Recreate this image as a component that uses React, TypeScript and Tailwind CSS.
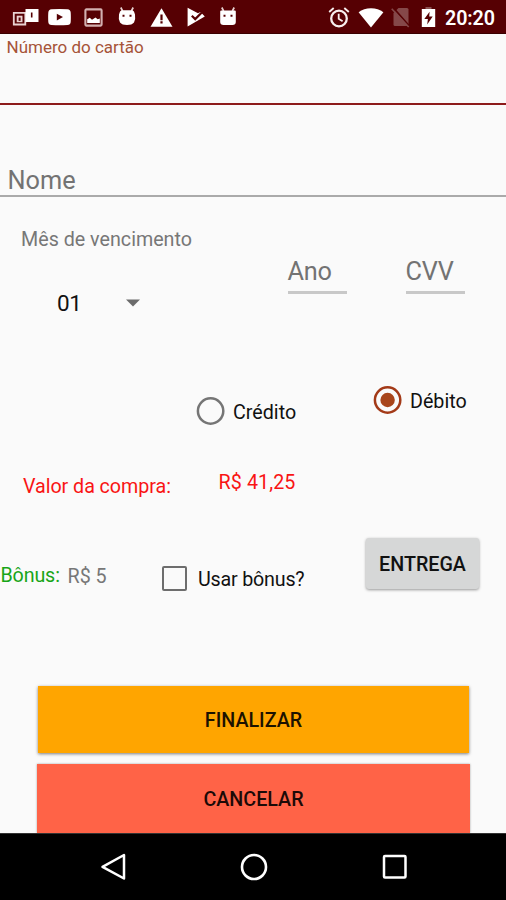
import type { ReactNode } from "react";

const AndroidHead = ({ square }: { square?: boolean }) => (
  <svg width="18" height="20" viewBox="0 0 18 20" fill="#fff">
    <path d="M2.800 1.500 4.600 5M15.200 1.500 13.400 5" stroke="#e6d0d0" strokeWidth="1.700" />
    <path
      fillRule="evenodd"
      d={
        square
          ? "M1.200 5.500Q1.200 4.500 2.200 4.500H15.800Q16.800 4.500 16.800 5.500V16Q16.800 19 13.500 19H4.500Q1.200 19 1.200 16zM4.500 8.700v2h2v-2zm7 0v2h2v-2z"
          : "M3.500 4.200H14.500Q16.200 4.800 17 8.500 17.800 13.500 16 16.500 14 19 9 19T2 16.500Q.2 13.500 1 8.500 1.800 4.800 3.500 4.200zM4.500 8.700v2h2v-2zm7 0v2h2v-2z"
      }
    />
  </svg>
);

const StatusBar = () => (
  <header className="flex h-[34px] items-start border-b border-[#3a0000] bg-[#560003]">
    <div className="flex h-[34px] w-[253px] shrink-0 pl-[12px]">
      <svg className="mt-[8px]" width="28" height="20" viewBox="0 0 28 20">
        <path d="M1.800 4.800h11.500v11.700H1.800z" fill="none" stroke="#e9d2d2" strokeWidth="1.800" />
        <path d="M4.700 7.700h5.800v6.500H4.700z" fill="#e9d2d2" />
        <path d="M6.600 9.500h2v3.400h-2z" fill="#560003" />
        <path d="M13.500 1h13v13h-13z" fill="#fff" />
        <path d="M18.900 4.500h1.600v5h-1.600z" fill="#560003" />
      </svg>
      <svg className="ml-[8px] mt-[9px]" width="23" height="17" viewBox="0 0 23 17">
        <path d="M3.500.3Q11.500-.3 19.500.3 22.500.5 22.700 3.500 23 8.500 22.700 13 22.500 15.800 19.500 16 11.500 16.600 3.500 16 .5 15.800.3 13 0 8.500.3 3.500.5.5 3.500.3z" fill="#fff" />
        <path d="M8.800 4.800v6.700l6.200-3.400z" fill="#560003" />
      </svg>
      <svg className="ml-[13px] mt-[8px]" width="19" height="19" viewBox="0 0 19 19">
        <rect x="1.400" y="1.400" width="16.200" height="16.200" rx="1" fill="none" stroke="#d3b0b0" strokeWidth="2.100" />
        <path d="M3.200 15v-3.800l2.600-1.400 2.200 1.900 3.500-2.300 2.200 1.800 2.100-.6V15z" fill="#fff" />
      </svg>
      <div className="ml-[15px] mt-[6px]">
        <AndroidHead />
      </div>
      <svg className="ml-[14px] mt-[8px]" width="23" height="19" viewBox="0 0 23 19">
        <path d="M11.500.3 22.500 18.700H.5z" fill="#fff" />
        <path d="M10.400 6.500h2.200v5.700h-2.200zm0 6.700h2.200v2.300h-2.200z" fill="#560003" />
      </svg>
      <svg className="ml-[13px] mt-[7px]" width="20" height="20" viewBox="0 0 20 20">
        <path d="M1.600.7 12 6.300 14.500 5 18.800 9.400 1.600 19.500z" fill="#fff" />
        <path d="m5.800 8.800 3.400 3.300 6.600-6.600" fill="none" stroke="#560003" strokeWidth="2.200" />
      </svg>
      <div className="ml-[13px] mt-[6px]">
        <AndroidHead square />
      </div>
    </div>
    <div className="flex h-[34px] pl-[75px]">
      <svg className="mt-[7px]" width="22" height="21" viewBox="0 0 22 21" fill="none" stroke="#f8eeee">
        <circle cx="11" cy="11.500" r="7.800" strokeWidth="2.300" />
        <path d="M1.200 4.900 5.700 1.100M20.800 4.900 16.300 1.100" strokeWidth="1.900" />
        <path d="M10.700 6.700v5.100l3.900 2.400" strokeWidth="1.800" />
      </svg>
      <svg className="ml-[8px] mt-[8px]" width="26" height="20" viewBox="0 0 26 20">
        <path d="M.6 4.200C4 1.600 8.200.2 13 .2s9 1.400 12.400 4L13 19.600z" fill="#fff" />
      </svg>
      <svg className="ml-[7px] mt-[7px]" width="19" height="21" viewBox="0 0 19 21">
        <path d="M7.500 1H16q1.500 0 1.500 1.500V19H4Q2.500 19 2.500 17.500V6z" fill="#854849" />
        <path d="m1.800.2 17 19.500" stroke="#560003" strokeWidth="1.800" />
        <path d="m.7 1.700 17 18.300" stroke="#854849" strokeWidth="1.600" />
      </svg>
      <svg className="ml-[11px] mt-[6px]" width="15" height="22" viewBox="0 0 15 22">
        <path d="M4.500 1h6v3h-6z" fill="#8c5354" />
        <path d="M.8 3h13.400v18H.8z" fill="#fff" />
        <path d="M8.600 5.700 3.300 13h3.600l-.7 5.500 5.500-7.900H8.200z" fill="#560003" />
      </svg>
      <span className="ml-[9px] mt-[7px] text-[19.7px] font-semibold leading-[24px] tracking-[-0.1px] text-white">
        20:20
      </span>
    </div>
  </header>
);

const ShortField = ({ label }: { label: string }) => (
  <div className="flex h-[38px] w-[59px] flex-col border-b-3 border-[#c8c8c8]">
    <span className="pt-px text-[25.3px] leading-[30px] tracking-[-0.2px] text-[#737373]">{label}</span>
  </div>
);

const Radio = ({ checked, children }: { checked?: boolean; children: ReactNode }) => (
  <label className="flex h-[28px] items-center">
    <svg width="29" height="28" viewBox="0 0 29 28">
      <circle cx="14.600" cy="14" r="12.700" fill="none" stroke={checked ? "#a33a18" : "#757575"} strokeWidth="2.500" />
      {checked && <circle cx="14.600" cy="14" r="7.200" fill="#a8451b" />}
    </svg>
    <span className="ml-[8px] mt-[3px] text-[19.7px] leading-[24px] text-[#111]">{children}</span>
  </label>
);

const NavBar = () => (
  <nav className="flex h-[67px] justify-center gap-[113px] border-t border-[#333] bg-black pl-px pt-[19px]">
    <svg width="27" height="28" viewBox="0 0 27 28" fill="none" stroke="#fff" strokeWidth="2.500" strokeLinejoin="round">
      <path d="M24 2v23.500L2.500 13.800z" />
    </svg>
    <svg width="28" height="28" viewBox="0 0 28 28" fill="none" stroke="#fff" strokeWidth="2.600">
      <circle cx="14" cy="14" r="12" />
    </svg>
    <svg width="27" height="28" viewBox="0 0 27 28" fill="none" stroke="#fff" strokeWidth="2.500">
      <rect x="3" y="3" width="21.500" height="21.500" rx="1" />
    </svg>
  </nav>
);

const App = () => {
  return (
    <div className="flex h-[900px] w-[506px] flex-col overflow-hidden bg-[#fafafa] font-[Roboto,sans-serif]">
      <StatusBar />
      <main className="flex flex-1 flex-col">
        <div className="h-[71px] border-b-2 border-[#8d1b1b] pl-[6.5px] pt-[2px]">
          <span className="block text-[17px] leading-[22px] text-[#a65338]">Número do cartão</span>
        </div>
        <div className="h-[92px] border-b-2 border-[#aaa] pl-[7.5px] pt-[61px]">
          <span className="block text-[25.3px] leading-[30px] text-[#737373]">Nome</span>
        </div>

        <section className="flex h-[189px]">
          <div className="w-[287.500px] pl-[21px] pt-[31px]">
            <span className="block text-[19.700px] leading-[24px] text-[#777]">Mês de vencimento</span>
            <div className="mt-[39px] flex items-center pl-[36px]">
              <span className="w-[69px] text-[22.5px] leading-[24px] tracking-[-0.5px] text-[#111]">01</span>
              <svg width="14" height="8" viewBox="0 0 14 8">
                <path d="M0 .5h14L7 7.500z" fill="#6b6b6b" />
              </svg>
            </div>
          </div>
          <div className="flex gap-[59px] pt-[59px]">
            <ShortField label="Ano" />
            <ShortField label="CVV" />
          </div>
        </section>

        <section className="flex h-[84px] items-start pl-[196px]">
          <div className="w-[177px] pt-[11px]">
            <Radio>Crédito</Radio>
          </div>
          <Radio checked>Débito</Radio>
        </section>

        <section className="flex h-[68px] items-start pl-[23px] text-[19.7px] leading-[24px] text-[#f91414]">
          <span className="w-[195.5px] pt-[5px] tracking-[-0.05px]">Valor da compra:</span>
          <span className="pt-px tracking-[0.1px]">R$ 41,25</span>
        </section>

        <section className="flex h-[148px] items-start text-[19.7px] leading-[24px]">
          <span className="w-[67.5px] pl-[0.5px] pt-[26px] tracking-[-0.15px] text-[#18a518]">Bônus:</span>
          <span className="w-[94.5px] pt-[27px] text-[#777]">R$ 5</span>
          <label className="flex w-[204px] items-center pt-[27px]">
            <span className="size-[25px] rounded-[2px] border-[2.5px] border-[#6d6d6d]" />
            <span className="ml-[11px] mt-[3px] tracking-[-0.2px] text-[#111]">Usar bônus?</span>
          </label>
          <button className="h-[51px] w-[113px] rounded-[3px] bg-[#d6d7d7] pt-[2px] text-[19.7px] font-medium text-[#111] shadow-[0_1px_3px_rgba(0,0,0,0.4)]">
            ENTREGA
          </button>
        </section>

        <section className="flex flex-col gap-[11px] px-[38px]">
          <button className="h-[67px] w-[431px] bg-[#ffa500] pt-[2px] text-[19.7px] font-medium text-[#1c1200] shadow-[0_1px_3px_rgba(0,0,0,0.5)]">
            FINALIZAR
          </button>
          <button className="-ml-px h-[69px] w-[433px] bg-[#ff6347] pt-[2px] text-[19.7px] font-medium text-[#1c0a07] shadow-[0_0_2px_rgba(0,0,0,0.35)]">
            CANCELAR
          </button>
        </section>
      </main>
      <NavBar />
    </div>
  );
};

export default App;
